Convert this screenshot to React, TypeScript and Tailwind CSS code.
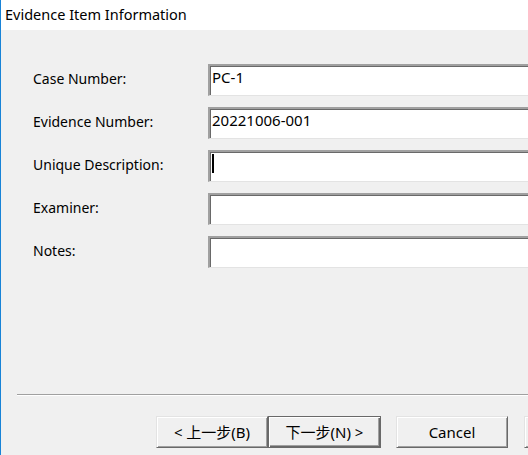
import React from 'react';

const fields = [
  { label: 'Case Number:', value: 'PC-1' },
  { label: 'Evidence Number:', value: '20221006-001' },
  { label: 'Unique Description:', value: '', caret: true },
  { label: 'Examiner:', value: '' },
  { label: 'Notes:', value: '' },
];

const fontStack = {
  fontFamily: '"Noto Sans", "Noto Sans CJK SC", sans-serif',
};

const Field: React.FC<{ label: string; value: string; caret?: boolean }> = ({ label, value, caret }) => (
  <div className="flex items-center h-[32px]">
    <div className="w-[175px] shrink-0 -mt-[3px]">{label}</div>
    {/* sunken edit box */}
    <div className="w-[340px] h-[32px] shrink-0 bg-white border-t-2 border-l-2 border-b border-r border-t-[#a0a0a0] border-l-[#a0a0a0] border-b-[#e3e3e3] border-r-[#e3e3e3] shadow-[inset_1px_1px_0_#696969] pl-[2px] pt-[1px] text-[15px] leading-[21px] flex items-start">
      {caret ? <span className="mt-[1px] w-[2px] h-[19px] bg-black" /> : <span>{value}</span>}
    </div>
  </div>
);

const WinButton: React.FC<{ children?: React.ReactNode; primary?: boolean }> = ({ children, primary }) => (
  <button
    className={
      primary
        ? 'w-[113px] h-[32px] shrink-0 bg-[#f0f0f0] border border-[#696969] shadow-[inset_1px_1px_0_#ffffff,inset_-1px_-1px_0_#696969,inset_-2px_-2px_0_#a0a0a0] flex items-center justify-center text-[15px]'
        : 'w-[112px] h-[32px] shrink-0 bg-[#f0f0f0] border-t border-l border-b border-r border-t-[#e3e3e3] border-l-[#e3e3e3] border-b-[#696969] border-r-[#696969] shadow-[inset_1px_1px_0_#ffffff,inset_-1px_-1px_0_#a0a0a0] flex items-center justify-center text-[15px]'
    }
  >
    {children}
  </button>
);

const App: React.FC = () => {
  return (
    <div
      className="w-[528px] h-[455px] overflow-hidden flex border-l border-[#1883d7] bg-[#f0f0f0] text-[14px] text-black"
      style={fontStack}
    >
      <div className="flex flex-col flex-1 min-w-0">
        {/* 헤더 */}
        <div className="h-[30px] shrink-0 bg-white pl-[4px] flex items-center text-[14.5px]">
          Evidence Item Information
        </div>

        {/* 입력 폼 */}
        <div className="pt-[34px] pl-[32px] flex flex-col gap-[11px]">
          {fields.map((f) => (
            <Field key={f.label} label={f.label} value={f.value} caret={f.caret} />
          ))}
        </div>

        {/* 구분선 */}
        <div className="mt-[126px] ml-[16px] w-[600px] shrink-0 border-t border-[#a0a0a0] border-b border-b-white" />

        {/* 버튼 */}
        <div className="mt-[20px] ml-[155px] flex">
          <WinButton>&lt; 上一步(B)</WinButton>
          <WinButton primary>下一步(N) &gt;</WinButton>
          <div className="w-[15px] shrink-0" />
          <WinButton>Cancel</WinButton>
          <div className="w-[16px] shrink-0" />
          {/* 잘린 Help 버튼 */}
          <WinButton />
        </div>
      </div>
    </div>
  );
};

export default App;
